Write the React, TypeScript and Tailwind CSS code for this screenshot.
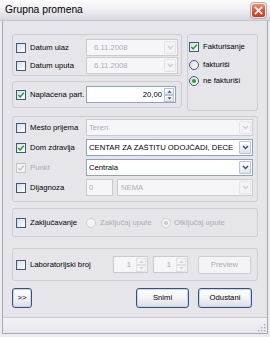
import React from "react";

function Check({ checked = false, disabled = false }: { checked?: boolean; disabled?: boolean }) {
  return (
    <span
      className={
        disabled
          ? "relative flex items-center justify-center w-[10px] h-[10px] shrink-0 border border-[#c4c3c9] bg-[#f4f4f6]"
          : "relative flex items-center justify-center w-[10px] h-[10px] shrink-0 border border-[#3a5a86] bg-linear-to-br from-[#dcdce2] to-[#ffffff]"
      }
    >
      {checked && (
        <svg width="8" height="8" viewBox="0 0 8 8">
          <path
            d="M1.3 4 L3.2 5.9 L6.8 1.8"
            fill="none"
            stroke={disabled ? "#c4c3c9" : "#21a121"}
            strokeWidth="1.5"
          />
        </svg>
      )}
    </span>
  );
}

function Radio({ checked = false, disabled = false }: { checked?: boolean; disabled?: boolean }) {
  return (
    <span
      className={
        disabled
          ? "flex items-center justify-center w-[10px] h-[10px] shrink-0 rounded-full border border-[#cfced4] bg-[#f4f4f6]"
          : "flex items-center justify-center w-[10px] h-[10px] shrink-0 rounded-full border border-[#3a5a86] bg-linear-to-br from-[#dcdce2] to-[#ffffff]"
      }
    >
      {checked && (
        <span
          className={
            disabled
              ? "w-[4px] h-[4px] rounded-full bg-[#c8c7cd]"
              : "w-[4px] h-[4px] rounded-full bg-[#21a121]"
          }
        />
      )}
    </span>
  );
}

function DropBtn({ disabled = false }: { disabled?: boolean }) {
  return (
    <span
      className={
        disabled
          ? "flex items-center justify-center w-[12px] h-[13px] mr-[1px] shrink-0 rounded-[1px] border border-[#e4e3e8] bg-[#f4f4f6]"
          : "flex items-center justify-center w-[12px] h-[13px] mr-[1px] shrink-0 rounded-[1px] border border-[#b7c3d8] bg-linear-to-b from-[#ffffff] to-[#dfe3ec]"
      }
    >
      <svg width="7" height="5" viewBox="0 0 7 5">
        <path
          d="M1 1 L3.5 3.6 L6 1"
          fill="none"
          stroke={disabled ? "#cfcdd4" : "#3c4e70"}
          strokeWidth="1.4"
        />
      </svg>
    </span>
  );
}

function Spinner({ disabled = false }: { disabled?: boolean }) {
  const box = disabled
    ? "flex-1 flex items-center justify-center border border-[#e1e0e5] bg-[#f4f4f6]"
    : "flex-1 flex items-center justify-center border border-[#b7c3d8] bg-linear-to-b from-[#ffffff] to-[#e2e5ed]";
  const col = disabled ? "#cfcdd4" : "#3c4e70";
  return (
    <span className="flex flex-col w-[10px] h-[14px] mr-[1px] shrink-0 gap-0">
      <span className={box}>
        <svg width="5" height="3" viewBox="0 0 5 3">
          <path d="M0.5 2.7 L2.5 0.5 L4.5 2.7 Z" fill={col} />
        </svg>
      </span>
      <span className={box}>
        <svg width="5" height="3" viewBox="0 0 5 3">
          <path d="M0.5 0.3 L2.5 2.5 L4.5 0.3 Z" fill={col} />
        </svg>
      </span>
    </span>
  );
}

function DateField() {
  return (
    <div className="w-[92px] h-[17px] flex items-center border border-[#cbcad0] bg-[#f6f6f8]">
      <span className="flex-1 pl-[7px] text-[#acacb2] leading-none">6.11.2008</span>
      <DropBtn disabled />
    </div>
  );
}

function Group({ className, children }: { className: string; children?: React.ReactNode }) {
  return <div className={className}>{children}</div>;
}

function CloseBtn() {
  return (
    <span className="flex items-center justify-center w-[15px] h-[15px] rounded-[3px] border border-[#f4e9e6] bg-linear-to-b from-[#eb8f74] via-[#d9573a] to-[#c23f1d] shadow-[0_0_0_1px_#b0aeb8]">
      <svg width="9" height="9" viewBox="0 0 9 9">
        <path d="M1.5 1.5 L7.5 7.5 M7.5 1.5 L1.5 7.5" stroke="#ffffff" strokeWidth="1.7" strokeLinecap="square" />
      </svg>
    </span>
  );
}

function Btn({ label, w, disabled = false }: { label: string; w: string; disabled?: boolean }) {
  return (
    <span
      className={
        disabled
          ? `${w} h-[18px] flex items-center justify-center rounded-[2px] border border-[#cfced6] bg-[#f4f4f6] text-[#acabb3]`
          : `${w} h-[20px] flex items-center justify-center rounded-[3px] border border-[#35527c] bg-linear-to-b from-[#ffffff] via-[#f3f3f6] to-[#dcdce4] shadow-[inset_0_0_0_1px_#c7d5ee]`
      }
    >
      {label}
    </span>
  );
}

export default function App() {
  return (
    <div className="w-[270px] h-[337px] bg-[#ececf0] flex flex-col font-['Liberation_Sans',Arial,sans-serif] text-[7.7px] text-black overflow-hidden select-none">
      {/* title bar */}
      <div className="h-[21px] shrink-0 flex items-center justify-between pl-[5px] pr-[4px] bg-linear-to-b from-[#fdfdfe] via-[#efeef3] to-[#d8d7df] border-b border-[#c6c5cd]">
        <span className="text-[10.3px] leading-none pt-[1px]">Grupna promena</span>
        <CloseBtn />
      </div>

      <div className="flex-1 mx-[2px] mb-[3px] border-x border-b border-[#a9a8b3] bg-[#e6e5ea] flex flex-col">
        <div className="pl-[9px] pt-[13px] flex flex-col">
          {/* top section */}
          <div className="flex gap-[5px] h-[77px]">
            <div className="w-[170px] flex flex-col">
              <Group className="h-[42px] rounded-[3px] border border-[#cdccd3] pl-[3px] pt-[4px] flex flex-col gap-[1px]">
                <div className="h-[17px] flex items-center">
                  <Check />
                  <span className="ml-[4px] w-[56px]">Datum ulaz</span>
                  <DateField />
                </div>
                <div className="h-[17px] flex items-center">
                  <Check />
                  <span className="ml-[4px] w-[56px]">Datum uputa</span>
                  <DateField />
                </div>
              </Group>
              <Group className="mt-[5px] h-[27px] rounded-[3px] border border-[#cdccd3] pl-[3px] flex items-center">
                <Check checked />
                <span className="ml-[4px] w-[56px] whitespace-nowrap">Naplaćena part.</span>
                <div className="w-[90px] h-[17px] flex items-center border border-[#8ea3c0] bg-white">
                  <span className="flex-1 text-right pr-[2px] leading-none">20,00</span>
                  <Spinner />
                </div>
              </Group>
            </div>
            <Group className="w-[71px] h-[77px] rounded-[3px] border border-[#cdccd3] pl-[1px] pt-[4px] flex flex-col">
              <div className="h-[16px] flex items-center">
                <Check checked />
                <span className="ml-[4px]">Fakturisanje</span>
              </div>
              <div className="mt-[2px] h-[16px] flex items-center">
                <Radio />
                <span className="ml-[4px]">fakturiši</span>
              </div>
              <div className="h-[16px] flex items-center">
                <Radio checked />
                <span className="ml-[4px]">ne fakturiši</span>
              </div>
            </Group>
          </div>

          {/* big group */}
          <Group className="mt-[5px] w-[246px] h-[86px] rounded-[3px] border border-[#cdccd3] pl-[3px] pt-[2px] flex flex-col gap-[3px]">
            <div className="h-[17px] flex items-center">
              <Check />
              <span className="ml-[4px] w-[56px]">Mesto prijema</span>
              <div className="w-[167px] h-[17px] flex items-center border border-[#cbcad0] bg-[#f6f6f8]">
                <span className="flex-1 pl-[2px] text-[#acacb2] leading-none">Teren</span>
                <DropBtn disabled />
              </div>
            </div>
            <div className="h-[17px] flex items-center">
              <Check checked />
              <span className="ml-[4px] w-[56px]">Dom zdravlja</span>
              <div className="w-[167px] h-[17px] flex items-center border border-[#8ea3c0] bg-white">
                <span className="flex-1 pl-[2px] leading-none whitespace-nowrap overflow-hidden">
                  CENTAR ZA ZAŠTITU ODOJČADI, DECE
                </span>
                <DropBtn />
              </div>
            </div>
            <div className="h-[17px] flex items-center">
              <Check checked disabled />
              <span className="ml-[4px] w-[56px] text-[#acacb2]">Punkt</span>
              <div className="w-[167px] h-[17px] flex items-center border border-[#8ea3c0] bg-white">
                <span className="flex-1 pl-[2px] leading-none">Centrala</span>
                <DropBtn />
              </div>
            </div>
            <div className="h-[17px] flex items-center">
              <Check />
              <span className="ml-[4px] w-[56px]">Dijagnoza</span>
              <div className="w-[27px] h-[17px] flex items-center border border-[#cbcad0] bg-[#f6f6f8]">
                <span className="pl-[2px] text-[#acacb2] leading-none">0</span>
              </div>
              <div className="ml-[4px] w-[136px] h-[17px] flex items-center border border-[#cbcad0] bg-[#f6f6f8]">
                <span className="flex-1 pl-[3px] text-[#acacb2] leading-none">NEMA</span>
                <DropBtn disabled />
              </div>
            </div>
          </Group>

          {/* zakljucavanje */}
          <Group className="mt-[6px] w-[246px] h-[29px] rounded-[3px] border border-[#cdccd3] pl-[3px] flex items-center">
            <Check />
            <span className="ml-[4px] w-[56px]">Zaključavanje</span>
            <Radio disabled />
            <span className="ml-[4px] w-[61px] text-[#acacb2]">Zaključaj upute</span>
            <Radio checked disabled />
            <span className="ml-[3px] text-[#acacb2]">Otključaj upute</span>
          </Group>

          {/* laboratorijski */}
          <Group className="mt-[11px] w-[246px] h-[33px] rounded-[3px] border border-[#cdccd3] pl-[3px] flex items-center">
            <Check />
            <span className="ml-[4px] w-[83px]">Laboratorijski broj</span>
            <div className="w-[35px] h-[17px] flex items-center border border-[#cbcad0] bg-[#f6f6f8]">
              <span className="flex-1 text-right pr-[5px] text-[#acacb2] leading-none">1</span>
              <Spinner disabled />
            </div>
            <div className="ml-[5px] w-[35px] h-[17px] flex items-center border border-[#cbcad0] bg-[#f6f6f8]">
              <span className="flex-1 text-right pr-[5px] text-[#acacb2] leading-none">1</span>
              <Spinner disabled />
            </div>
            <span className="ml-[10px]">
              <Btn label="Preview" w="w-[53px]" disabled />
            </span>
          </Group>

          {/* buttons */}
          <div className="mt-[7px] w-[246px] h-[20px] flex items-center">
            <Btn label=">>" w="w-[20px]" />
            <span className="ml-[104px]">
              <Btn label="Snimi" w="w-[53px]" />
            </span>
            <span className="ml-[9px]">
              <Btn label="Odustani" w="w-[54px]" />
            </span>
          </div>
        </div>

        {/* status bar */}
        <div className="mt-auto h-[16px] border-t border-[#c9c8d0] bg-linear-to-b from-[#f3f3f6] to-[#e7e6ec] flex items-end justify-end pr-[1px] pb-[1px]">
          <svg width="10" height="10" viewBox="0 0 10 10">
            <g fill="#a7a6b0">
              <rect x="8" y="2" width="1.3" height="1.3" />
              <rect x="5" y="5" width="1.3" height="1.3" />
              <rect x="8" y="5" width="1.3" height="1.3" />
              <rect x="2" y="8" width="1.3" height="1.3" />
              <rect x="5" y="8" width="1.3" height="1.3" />
              <rect x="8" y="8" width="1.3" height="1.3" />
            </g>
          </svg>
        </div>
      </div>
    </div>
  );
}
